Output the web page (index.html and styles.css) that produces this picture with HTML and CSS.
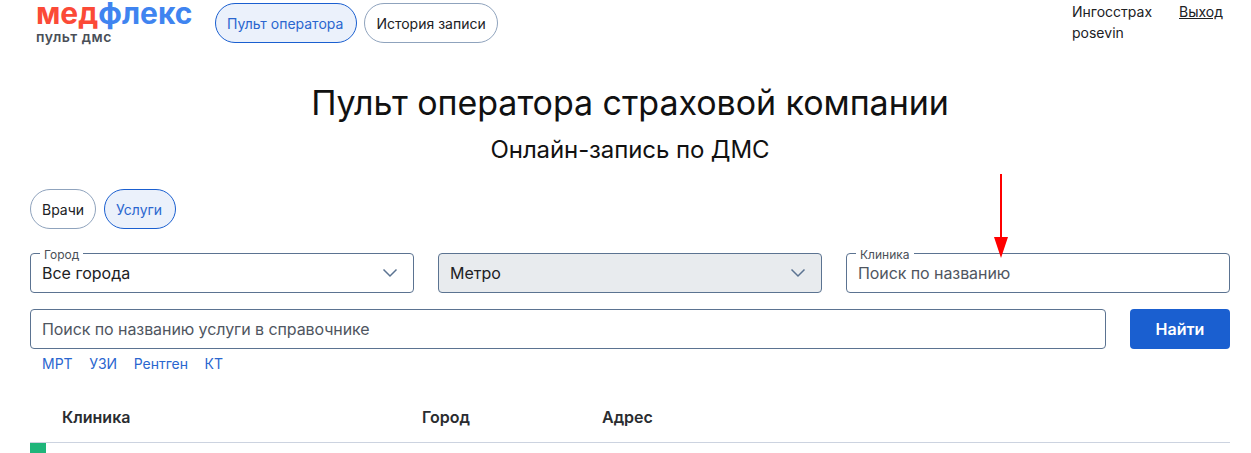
FILE: index.html
```html
<!DOCTYPE html>
<html lang="ru">
<head>
<meta charset="utf-8">
<title>Пульт оператора</title>
<link rel="stylesheet" href="styles.css">
</head>
<body>
<div class="page">
  <header class="header">
    <div class="logo">
      <div class="logo-main"><span class="logo-red">мед</span><span class="logo-blue">флекс</span></div>
      <div class="logo-sub">пульт дмс</div>
    </div>
    <nav class="nav">
      <a class="pill pill-active">Пульт оператора</a>
      <a class="pill">История записи</a>
    </nav>
    <div class="user">
      <div class="user-info">
        <div>Ингосстрах</div>
        <div>posevin</div>
      </div>
      <a class="logout">Выход</a>
    </div>
  </header>

  <h1 class="title">Пульт оператора страховой компании</h1>
  <h2 class="subtitle">Онлайн-запись по ДМС</h2>

  <div class="tabs">
    <a class="pill">Врачи</a>
    <a class="pill pill-active">Услуги</a>
  </div>

  <div class="filters">
    <div class="field">
      <span class="field-label">Город</span>
      <span class="field-value">Все города</span>
      <svg class="chev" width="16" height="10" viewBox="0 0 16 10"><path d="M1.5 1.5 8 8l6.5-6.5" fill="none" stroke="#5b7391" stroke-width="1.5"/></svg>
    </div>
    <div class="field field-disabled">
      <span class="field-value">Метро</span>
      <svg class="chev" width="16" height="10" viewBox="0 0 16 10"><path d="M1.5 1.5 8 8l6.5-6.5" fill="none" stroke="#5b7391" stroke-width="1.5"/></svg>
    </div>
    <div class="field">
      <span class="field-label">Клиника</span>
      <span class="field-value field-placeholder">Поиск по названию</span>
    </div>
  </div>

  <div class="search-row">
    <div class="field field-grow"><span class="field-value field-placeholder">Поиск по названию услуги в справочнике</span></div>
    <button class="find">Найти</button>
  </div>

  <div class="quick">
    <a>МРТ</a><a>УЗИ</a><a>Рентген</a><a>КТ</a>
  </div>

  <div class="thead">
    <div class="col-clinic">Клиника</div>
    <div class="col-city">Город</div>
    <div class="col-addr">Адрес</div>
  </div>
  <div class="marker"></div>
</div>

<svg class="arrow" width="16" height="86" viewBox="0 0 16 86"><path d="M7 0h2v64H7z" fill="#ff0000"/><path d="M1 63h14l-7 21z" fill="#ff0000"/></svg>
</body>
</html>
```
FILE: styles.css
```css
* { box-sizing: border-box; }
html, body { margin: 0; height: 100%; overflow: hidden; background: #fff; }
body { font-family: Inter, "Noto Sans", sans-serif; color: #202124; font-size: 14px; }
.page { padding: 0 21px 0 30px; }

.header { display: flex; align-items: flex-start; height: 58px; padding-top: 3px; }
.logo { width: 185px; padding-left: 6px; }
.logo-main { font-weight: 700; font-size: 30px; line-height: 20px; white-space: nowrap; }
.logo-red { color: #fb4a37; }
.logo-blue { color: #3f84f0; }
.logo-sub { font-weight: 600; font-size: 14px; line-height: 14px; letter-spacing: 0.55px; color: #4a4f57; margin-top: 7px; }

.nav { display: flex; gap: 7px; }
.pill { display: flex; align-items: center; height: 40px; padding: 0 11px; border: 1px solid #8fa3bd; border-radius: 20px; font-size: 14px; color: #202124; background: #fff; }
.pill-active { padding: 0 13px 0 11px; border-color: #1a5fd0; background: #ebf1fb; color: #2a66cf; }

.user { margin-left: auto; margin-right: 7px; margin-top: -2px; display: flex; gap: 27px; line-height: 21px; font-size: 14px; }
.user-info { width: 80px; }
.logout { color: #202124; text-decoration: underline; }

.title { margin: 24px 0 0; text-align: center; font-weight: 400; font-size: 34px; line-height: 42px; letter-spacing: -0.05px; color: #111; }
.subtitle { margin: 11px 0 0; text-align: center; font-weight: 400; font-size: 24px; line-height: 30px; letter-spacing: -0.1px; color: #111; }

.tabs { display: flex; gap: 8px; margin-top: 24px; }

.filters { display: grid; grid-template-columns: repeat(3, 384px); gap: 24px; margin-top: 24px; }
.field { position: relative; display: flex; align-items: center; height: 40px; padding: 0 11px; border: 1px solid #5b7391; border-radius: 4px; background: #fff; }
.field-disabled { background: #e8ebee; }
.field-grow { flex: 1; }
.field-label { position: absolute; left: 9px; top: -5px; padding: 0 4px; background: #fff; font-size: 12px; line-height: 12px; color: #4a4f57; }
.field-value { font-size: 16px; color: #202124; }
.field-placeholder { color: #4f5661; letter-spacing: -0.08px; }
.chev { margin-left: auto; margin-right: 4px; }

.search-row { display: flex; gap: 24px; margin-top: 16px; }
.find { width: 100px; height: 40px; border: 0; border-radius: 4px; background: #1a5fd0; color: #fff; font: 600 16px Inter, sans-serif; }

.quick { display: flex; gap: 16.5px; padding-left: 12px; margin-top: 6px; font-size: 14px; line-height: 17px; color: #2a66cf; }

.thead { display: flex; margin-top: 35px; height: 36px; padding-left: 32px; font-weight: 600; font-size: 16px; line-height: 20px; border-bottom: 1px solid #ccd3e0; color: #2a2c30; }
.col-clinic { width: 360px; }
.col-city { width: 180px; }

.marker { width: 16px; height: 12px; background: #1fb57a; }

.arrow { position: absolute; left: 993px; top: 174px; }
```
